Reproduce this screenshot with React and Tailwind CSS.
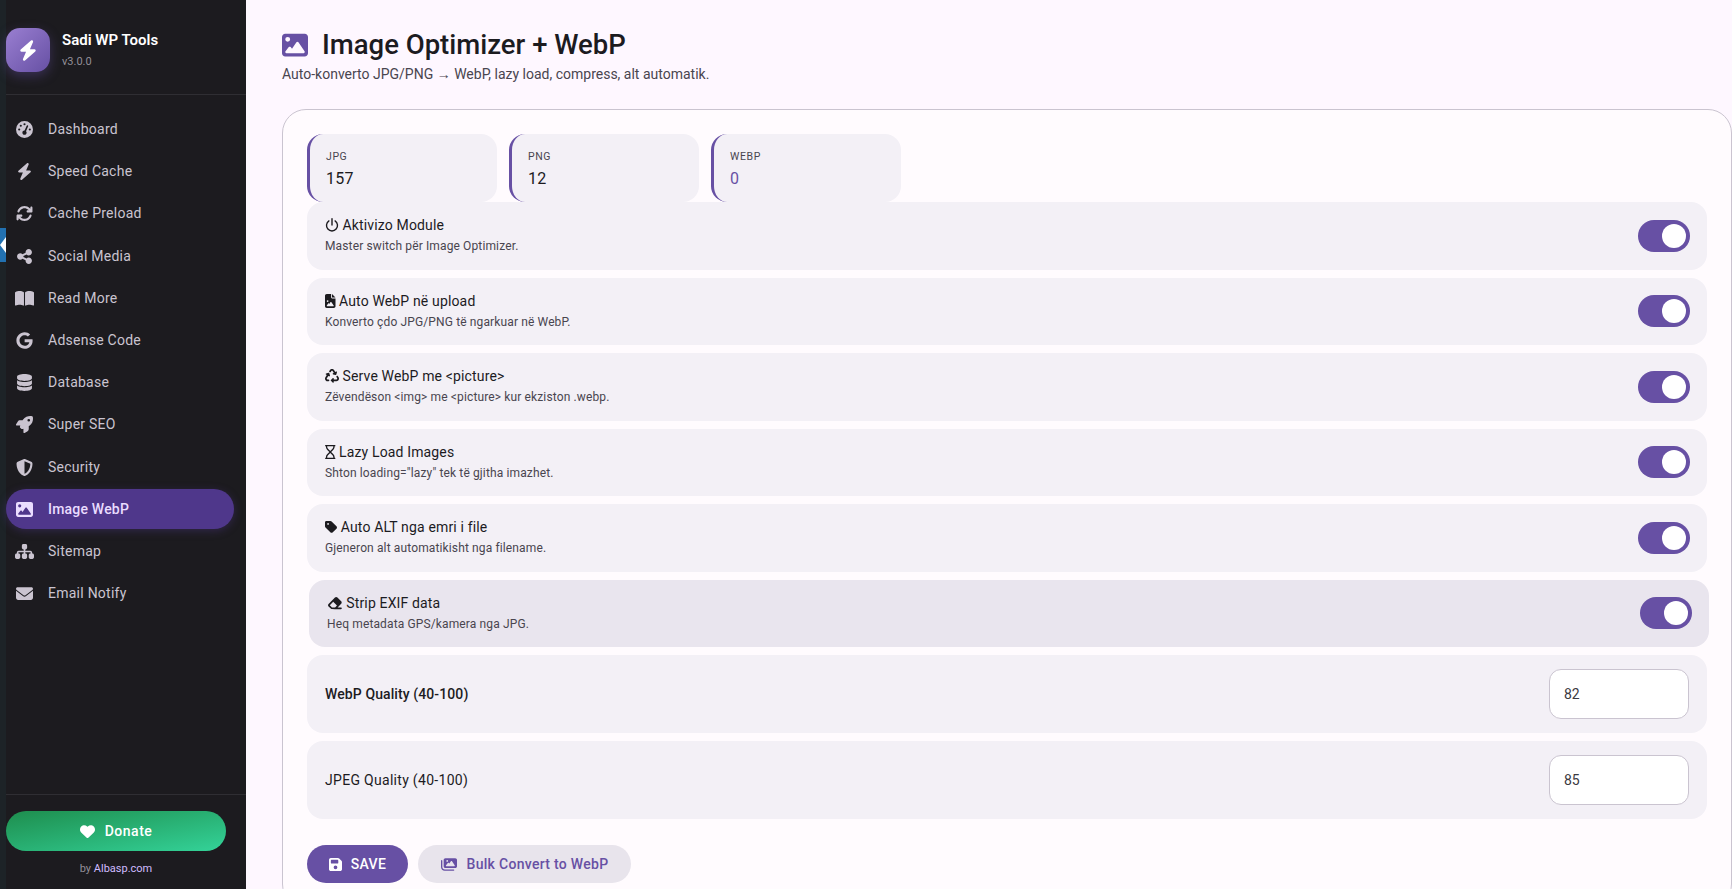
import {
  FaGaugeHigh,
  FaBolt,
  FaArrowsRotate,
  FaShareNodes,
  FaBookOpen,
  FaGoogle,
  FaDatabase,
  FaRocket,
  FaShieldHalved,
  FaImage,
  FaSitemap,
  FaEnvelope,
  FaHeart,
  FaFileImage,
  FaRecycle,
  FaRegHourglass,
  FaTag,
  FaEraser,
  FaFloppyDisk,
  FaImages,
} from "react-icons/fa6";

// power glyph in the picture is thin, nothing in the packages lines up
function PowerIcon({ className }) {
  return (
    <svg viewBox="0 0 14 14" fill="none" stroke="currentColor" strokeWidth="1.4" strokeLinecap="round" className={className}>
      <path d="M7 0.8v6.2" />
      <path d="M3.9 2.9A5.5 5.5 0 1 0 10.1 2.9" />
    </svg>
  );
}

const navItems = [
  { label: "Dashboard", icon: FaGaugeHigh },
  { label: "Speed Cache", icon: FaBolt },
  { label: "Cache Preload", icon: FaArrowsRotate },
  { label: "Social Media", icon: FaShareNodes },
  { label: "Read More", icon: FaBookOpen },
  { label: "Adsense Code", icon: FaGoogle },
  { label: "Database", icon: FaDatabase },
  { label: "Super SEO", icon: FaRocket },
  { label: "Security", icon: FaShieldHalved },
  { label: "Image WebP", icon: FaImage, active: true },
  { label: "Sitemap", icon: FaSitemap },
  { label: "Email Notify", icon: FaEnvelope },
];

const stats = [
  { label: "JPG", value: "157" },
  { label: "PNG", value: "12" },
  { label: "WEBP", value: "0", accent: true },
];

const toggles = [
  { title: "Aktivizo Module", desc: "Master switch për Image Optimizer.", icon: PowerIcon, iconClass: "h-[14px] w-[14px]" },
  { title: "Auto WebP në upload", desc: "Konverto çdo JPG/PNG të ngarkuar në WebP.", icon: FaFileImage, iconClass: "h-[14px] w-[10.5px]" },
  { title: "Serve WebP me <picture>", desc: "Zëvendëson <img> me <picture> kur ekziston .webp.", icon: FaRecycle, iconClass: "h-[14px] w-[14px]" },
  { title: "Lazy Load Images", desc: 'Shton loading="lazy" tek të gjitha imazhet.', icon: FaRegHourglass, iconClass: "h-[14px] w-[10.5px]" },
  { title: "Auto ALT nga emri i file", desc: "Gjeneron alt automatikisht nga filename.", icon: FaTag, iconClass: "h-[14px] w-[12.25px]" },
  { title: "Strip EXIF data", desc: "Heq metadata GPS/kamera nga JPG.", icon: FaEraser, iconClass: "h-[14px] w-[15.75px]", hovered: true },
];

function Toggle() {
  return (
    <div className="flex h-8 w-[52px] shrink-0 items-center justify-end rounded-full bg-[#6750a4] pr-1">
      <div className="h-6 w-6 rounded-full bg-white" />
    </div>
  );
}

function Sidebar() {
  return (
    <aside className="flex h-full w-[240px] shrink-0 flex-col bg-[#1c1b1f]">
      <div className="flex h-[95px] shrink-0 items-start gap-3 border-b border-[#2f2e33] pt-7">
        <div className="flex h-11 w-11 items-center justify-center rounded-[14px] bg-gradient-to-br from-[#9a7fd1] to-[#6750a4] shadow-[0_4px_12px_rgba(103,80,164,0.4)]">
          <FaBolt className="h-[21px] w-[18px] text-white" />
        </div>
        <div className="pt-0.5">
          <div className="text-[15px] font-semibold leading-5 text-white">Sadi WP Tools</div>
          <div className="mt-1 text-[11px] leading-4 text-[#938f99]">v3.0.0</div>
        </div>
      </div>
      <nav className="flex flex-col gap-[2px] pt-[14.5px]">
        {navItems.map((item) => (
          <div
            key={item.label}
            className={
              item.active
                ? "flex h-[40.2px] w-[228px] items-center gap-[14px] rounded-full bg-[#4f378b] pl-[9px] text-[14px] font-medium tracking-[0.2px] text-[#eaddff] shadow-[0_2px_8px_rgba(79,55,139,0.4)]"
                : "flex h-[40.2px] w-[228px] items-center gap-[14px] rounded-full pl-[9px] text-[14px] tracking-[0.25px] text-[#cac4d0]"
            }
          >
            <span className="flex w-[19px] shrink-0 justify-center">
              <item.icon className="h-[17px] w-[19px]" />
            </span>
            <span>{item.label}</span>
          </div>
        ))}
      </nav>
      <div className="mt-auto flex h-[95px] shrink-0 flex-col border-t border-[#2f2e33] pt-4">
        <div className="flex h-10 w-[220px] items-center justify-center gap-2.5 rounded-full bg-gradient-to-br from-[#1e8e4e] to-[#34d399] text-[14px] font-medium tracking-[0.5px] text-white">
          <FaHeart className="text-[15px]" />
          Donate
        </div>
        <div className="mt-2.5 w-[220px] text-center text-[11px] leading-4 text-[#938f99]">
          by <span className="text-[#d0bcff]">Albasp.com</span>
        </div>
      </div>
    </aside>
  );
}

export default function App() {
  return (
    <div className="flex h-screen overflow-hidden bg-[#fef7ff] font-['Roboto',sans-serif] text-[#1c1b1f]">
      {/* wp admin strip */}
      <div className="h-full w-[6px] shrink-0 bg-[#1d2327] pt-[228px]">
        <div className="flex h-[34px] items-center bg-[#2271b1]">
          <div className="h-0 w-0 border-y-[8px] border-r-[6px] border-y-transparent border-r-white" />
        </div>
      </div>
      <Sidebar />

      <main className="min-w-0 flex-1 pl-[36px]">
        <div className="flex items-center gap-[14px] pt-[27px]">
          <FaImage className="h-[26px] w-[26px] text-[#6750a4]" />
          <h1 className="text-[27.5px] font-medium leading-9">Image Optimizer + WebP</h1>
        </div>
        <p className="mt-[1px] text-[14px] leading-5 text-[#49454f]">
          Auto-konverto JPG/PNG → WebP, lazy load, compress, alt automatik.
        </p>

        <section className="mt-[25px] rounded-3xl border border-[#cac4d0] bg-[#fffbfe] pb-6 pl-6 pr-6 pt-6">
          <div className="flex gap-3">
            {stats.map((s) => (
              <div key={s.label} className="h-[68px] w-[190px] rounded-2xl border-l-[3px] border-[#6750a4] bg-[#f3f0f6] pl-4 pt-[15px]">
                <div className="text-[10.5px] uppercase leading-4 tracking-[0.6px] text-[#49454f]">{s.label}</div>
                <div className={s.accent ? "mt-1 text-[16px] leading-5 tracking-[0.2px] text-[#6750a4]" : "mt-1 text-[16px] leading-5 tracking-[0.2px]"}>{s.value}</div>
              </div>
            ))}
          </div>

          <div className="flex flex-col gap-2">
            {toggles.map((t) => (
              <div
                key={t.title}
                className={
                  t.hovered
                    ? "flex h-[67.5px] translate-x-[2px] items-center justify-between rounded-2xl bg-[#e9e5ee] pl-[18px] pr-[17px]"
                    : "flex h-[67.5px] items-center justify-between rounded-2xl bg-[#f3f0f6] pl-[18px] pr-[17px]"
                }
              >
                <div className="pb-[2px]">
                  <div className="flex items-center gap-[3.5px] text-[14px] leading-5 tracking-[0.15px]">
                    <t.icon className={t.iconClass} />
                    <span>{t.title}</span>
                  </div>
                  <div className="mt-[3px] text-[12px] leading-4 tracking-[0.13px] text-[#49454f]">{t.desc}</div>
                </div>
                <Toggle />
              </div>
            ))}
            <div className="flex h-[78px] items-center justify-between rounded-2xl bg-[#f3f0f6] pl-[18px] pr-[18px]">
              <label className="pt-[1px] text-[14px] font-medium tracking-[0.1px]">WebP Quality (40-100)</label>
              <input readOnly value="82" className="h-[50px] w-[140px] rounded-xl border border-[#cac4d0] bg-white px-[14px] text-[14px] text-[#3c3a41] outline-none" />
            </div>
            <div className="flex h-[78px] items-center justify-between rounded-2xl bg-[#f3f0f6] pl-[18px] pr-[18px]">
              <label className="pt-[1px] text-[14px] tracking-[0.3px]">JPEG Quality (40-100)</label>
              <input readOnly value="85" className="h-[50px] w-[140px] rounded-xl border border-[#cac4d0] bg-white px-[14px] text-[14px] text-[#3c3a41] outline-none" />
            </div>
          </div>

          <div className="mt-[26px] flex gap-2.5">
            <button className="flex h-[38px] w-[101px] items-center justify-center gap-[9px] rounded-full bg-[#6750a4] text-[14px] font-medium tracking-[0.3px] text-white">
              <FaFloppyDisk className="h-[15px] w-[13px]" />
              SAVE
            </button>
            <button className="flex h-[38px] w-[213px] items-center justify-center gap-2.5 rounded-full bg-[#e8e4ec] text-[14px] font-medium tracking-[0.3px] text-[#6750a4]">
              <FaImages className="h-[15px] w-[16px]" />
              Bulk Convert to WebP
            </button>
          </div>
        </section>
      </main>
    </div>
  );
}
